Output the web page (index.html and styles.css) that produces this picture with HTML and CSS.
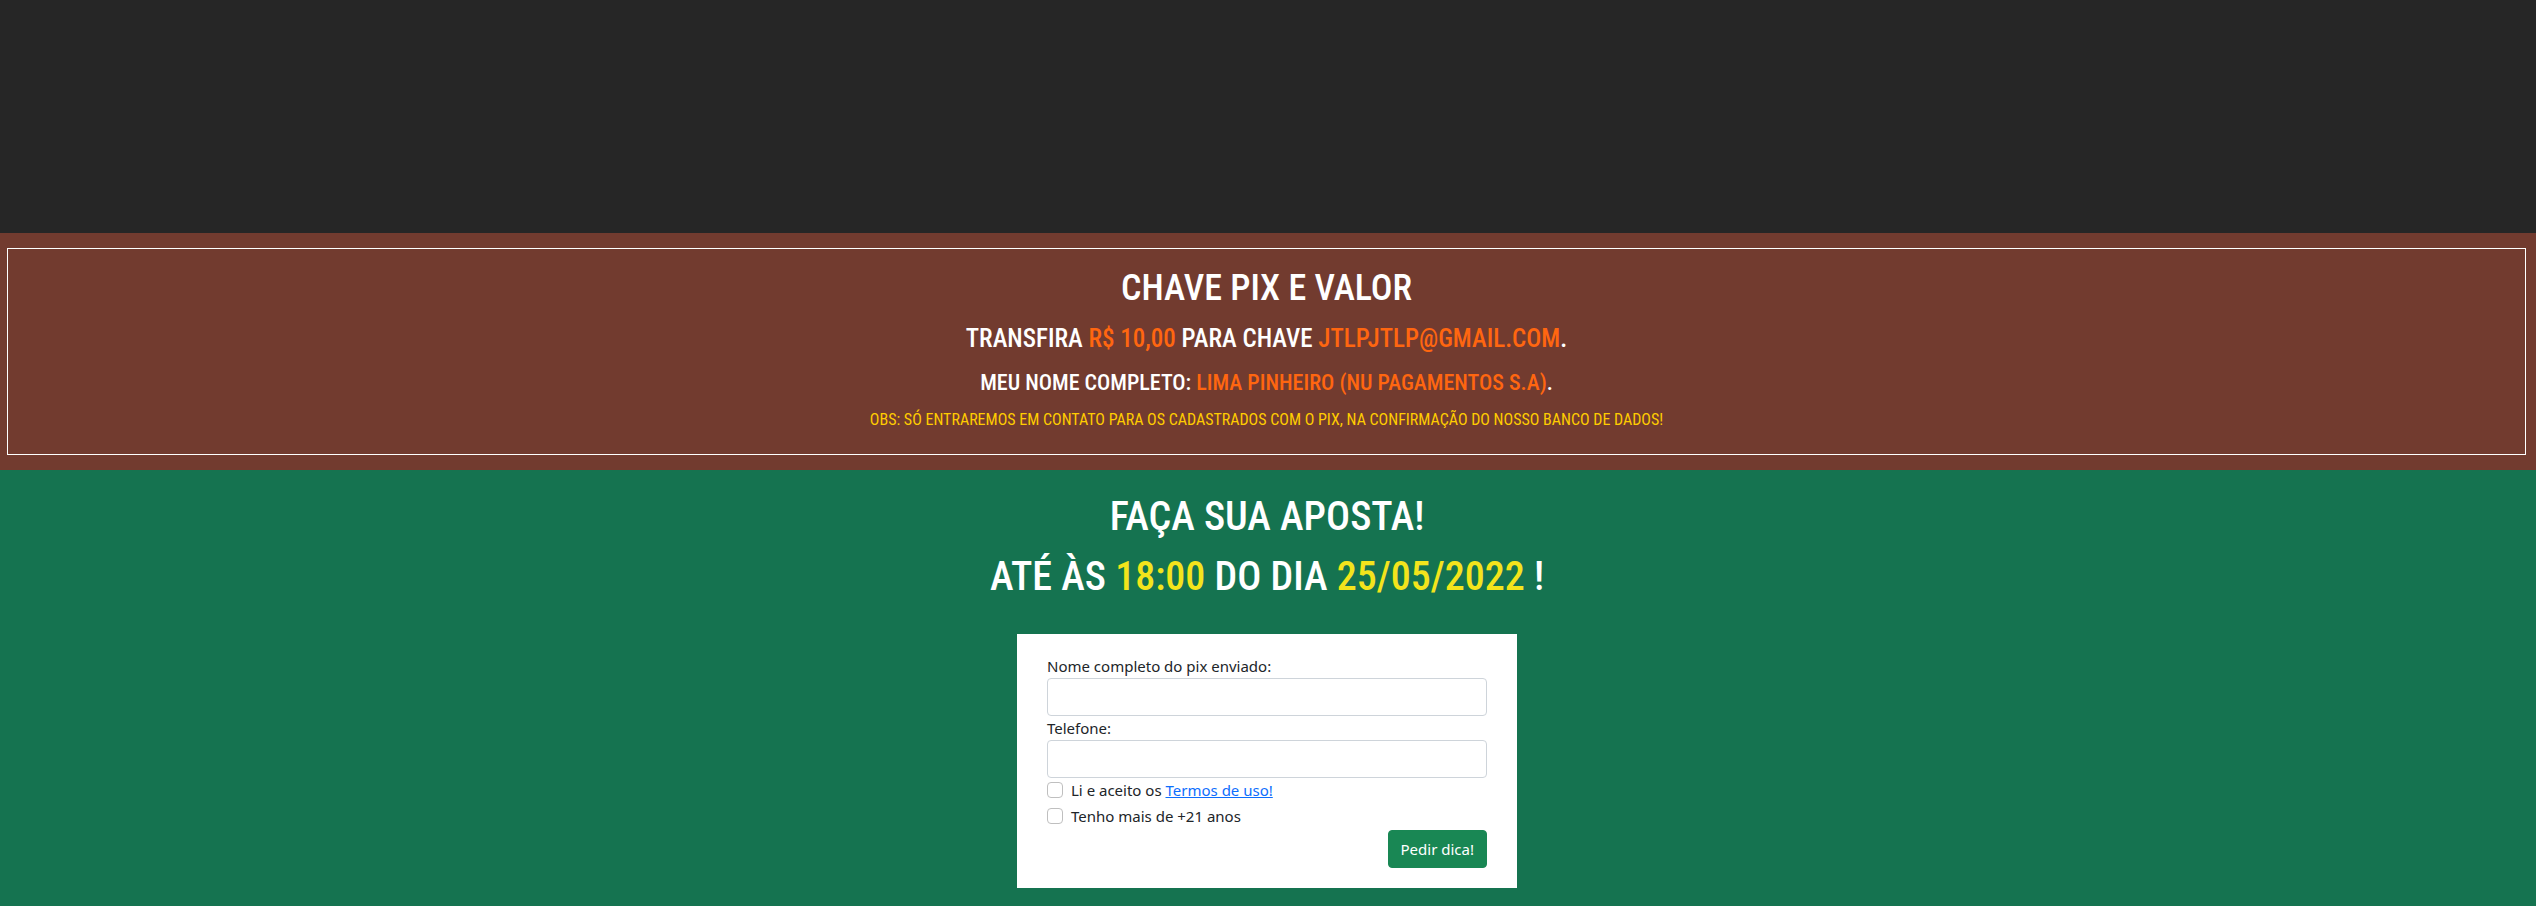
FILE: index.html
```html
<!DOCTYPE html>
<html lang="pt-BR">
<head>
<meta charset="utf-8">
<meta name="viewport" content="width=device-width, initial-scale=1">
<title>Faça sua aposta</title>
<link rel="stylesheet" href="styles.css">
</head>
<body>
<header class="banner"></header>
<section class="payment">
  <div class="payment-box">
    <h1 class="payment-title">CHAVE PIX E VALOR</h1>
    <h2 class="payment-key">TRANSFIRA <span class="accent">R$ 10,00</span> PARA CHAVE <span class="accent">JTLPJTLP@GMAIL.COM</span>.</h2>
    <h3 class="payment-name">MEU NOME COMPLETO: <span class="accent">LIMA PINHEIRO (NU PAGAMENTOS S.A)</span>.</h3>
    <h5 class="payment-note">OBS: SÓ ENTRAREMOS EM CONTATO PARA OS CADASTRADOS COM O PIX, NA CONFIRMAÇÃO DO NOSSO BANCO DE DADOS!</h5>
  </div>
</section>
<main class="bet">
  <h1 class="bet-title">FAÇA SUA APOSTA!<br>ATÉ ÀS <span class="deadline">18:00</span> DO DIA <span class="deadline">25/05/2022</span> !</h1>
  <form class="bet-form">
    <label for="nome">Nome completo do pix enviado:</label>
    <input class="field" type="text" id="nome">
    <label for="telefone">Telefone:</label>
    <input class="field" type="tel" id="telefone">
    <div class="check">
      <input class="check-box" type="checkbox" id="termos">
      <label for="termos">Li e aceito os <a href="#termos">Termos de uso!</a></label>
    </div>
    <div class="check">
      <input class="check-box" type="checkbox" id="idade">
      <label for="idade">Tenho mais de +21 anos</label>
    </div>
    <button class="submit" type="submit">Pedir dica!</button>
  </form>
</main>
</body>
</html>
```
FILE: styles.css
```css
* { box-sizing: border-box; }

body {
  margin: 0;
  min-height: 100vh;
  display: flex;
  flex-direction: column;
  background: #262626;
  color: #212529;
  font: 15px/24px "Noto Sans", sans-serif;
}

h1, h2, h3, h5 { margin: 0; font-weight: 500; }

.banner { height: 233px; background: #262626; }

.payment {
  padding: 15px 10px 15px 7px;
  background: #723b2f;
}

.payment-box,
.bet-title {
  color: #fff;
  font-family: "Roboto Condensed", Roboto, sans-serif;
  text-align: center;
}

.payment-box {
  display: flex;
  flex-direction: column;
  gap: 8px;
  padding: 15px 15px 22px;
  border: 1px solid #fff;
}

.payment-title { font-size: 36px; line-height: 48px; }
.payment-key { font-size: 25px; line-height: 38px; }
.payment-name { font-size: 22px; line-height: 34px; }
.payment-note { font-size: 16px; line-height: 24px; font-weight: 400; color: #fc0; }
.accent { color: #ff6610; }

.bet {
  flex: 1;
  display: flex;
  flex-direction: column;
  align-items: center;
  padding: 17px 2px 16px 0;
  background: #157350;
}

.bet-title { font-size: 40px; line-height: 60px; margin-bottom: 27px; }
.deadline { color: #f3e41c; }

.bet-form {
  display: flex;
  flex-direction: column;
  width: 100%;
  max-width: 500px;
  padding: 20px 30px;
  background: #fff;
}

.field {
  width: 100%;
  height: 38px;
  padding: 6px 12px;
  border: 1px solid #ced4da;
  border-radius: 4px;
  background: #fff;
  font: inherit;
}

.check {
  display: flex;
  align-items: center;
  gap: 8px;
  margin-bottom: 2px;
}

.check-box {
  appearance: none;
  width: 16px;
  height: 16px;
  margin: 0;
  border: 1px solid #bfbfbf;
  border-radius: 4px;
  background: #fff;
}

.check-box:checked { background: #0d6efd; }

.check a { color: #0d6efd; }

.submit {
  align-self: flex-end;
  padding: 6px 12px;
  border: 1px solid #198754;
  border-radius: 4px;
  background: #198754;
  color: #fff;
  font: inherit;
}
```
